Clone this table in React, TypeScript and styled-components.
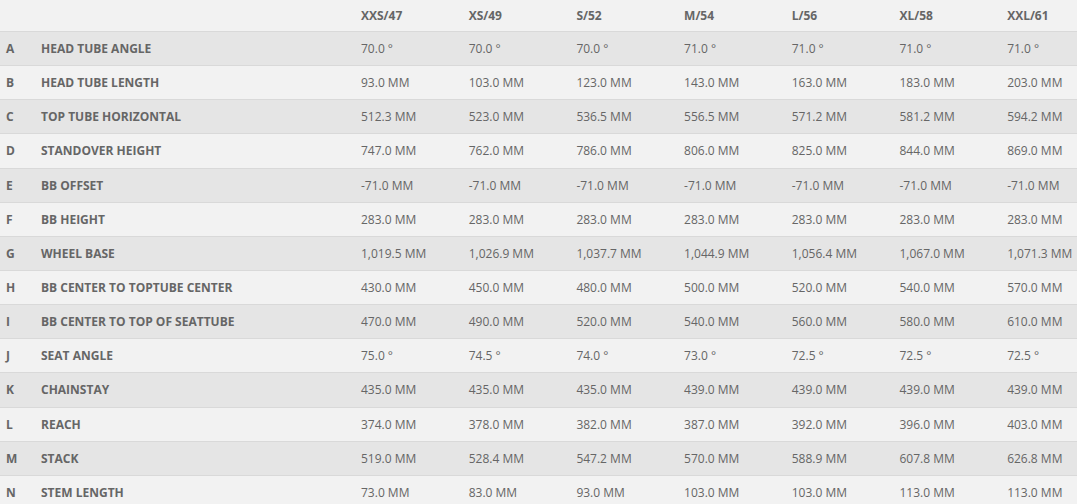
import React, { FC } from 'react';
import styled, { createGlobalStyle } from 'styled-components';

const GlobalStyle = createGlobalStyle`
  html, body {
    margin: 0;
    padding: 0;
    background: #f2f2f2;
    overflow: hidden;
  }
  body {
    font-family: 'Open Sans', 'Liberation Sans', sans-serif;
    color: #666;
  }
`;

const sizes = ['XXS/47', 'XS/49', 'S/52', 'M/54', 'L/56', 'XL/58', 'XXL/61'];

interface IRow {
  key: string;
  name: string;
  values: string[];
}

const rows: IRow[] = [
  { key: 'A', name: 'HEAD TUBE ANGLE', values: ['70.0 °', '70.0 °', '70.0 °', '71.0 °', '71.0 °', '71.0 °', '71.0 °'] },
  { key: 'B', name: 'HEAD TUBE LENGTH', values: ['93.0 MM', '103.0 MM', '123.0 MM', '143.0 MM', '163.0 MM', '183.0 MM', '203.0 MM'] },
  { key: 'C', name: 'TOP TUBE HORIZONTAL', values: ['512.3 MM', '523.0 MM', '536.5 MM', '556.5 MM', '571.2 MM', '581.2 MM', '594.2 MM'] },
  { key: 'D', name: 'STANDOVER HEIGHT', values: ['747.0 MM', '762.0 MM', '786.0 MM', '806.0 MM', '825.0 MM', '844.0 MM', '869.0 MM'] },
  { key: 'E', name: 'BB OFFSET', values: ['-71.0 MM', '-71.0 MM', '-71.0 MM', '-71.0 MM', '-71.0 MM', '-71.0 MM', '-71.0 MM'] },
  { key: 'F', name: 'BB HEIGHT', values: ['283.0 MM', '283.0 MM', '283.0 MM', '283.0 MM', '283.0 MM', '283.0 MM', '283.0 MM'] },
  { key: 'G', name: 'WHEEL BASE', values: ['1,019.5 MM', '1,026.9 MM', '1,037.7 MM', '1,044.9 MM', '1,056.4 MM', '1,067.0 MM', '1,071.3 MM'] },
  { key: 'H', name: 'BB CENTER TO TOPTUBE CENTER', values: ['430.0 MM', '450.0 MM', '480.0 MM', '500.0 MM', '520.0 MM', '540.0 MM', '570.0 MM'] },
  { key: 'I', name: 'BB CENTER TO TOP OF SEATTUBE', values: ['470.0 MM', '490.0 MM', '520.0 MM', '540.0 MM', '560.0 MM', '580.0 MM', '610.0 MM'] },
  { key: 'J', name: 'SEAT ANGLE', values: ['75.0 °', '74.5 °', '74.0 °', '73.0 °', '72.5 °', '72.5 °', '72.5 °'] },
  { key: 'K', name: 'CHAINSTAY', values: ['435.0 MM', '435.0 MM', '435.0 MM', '439.0 MM', '439.0 MM', '439.0 MM', '439.0 MM'] },
  { key: 'L', name: 'REACH', values: ['374.0 MM', '378.0 MM', '382.0 MM', '387.0 MM', '392.0 MM', '396.0 MM', '403.0 MM'] },
  { key: 'M', name: 'STACK', values: ['519.0 MM', '528.4 MM', '547.2 MM', '570.0 MM', '588.9 MM', '607.8 MM', '626.8 MM'] },
  { key: 'N', name: 'STEM LENGTH', values: ['73.0 MM', '83.0 MM', '93.0 MM', '103.0 MM', '103.0 MM', '113.0 MM', '113.0 MM'] },
];

const Table = styled.div`
  width: 1110px;
  font-size: 12px;
`;

const Row = styled.div<{ $shaded?: boolean }>`
  display: grid;
  grid-template-columns: 35px 320px repeat(7, 107.7px);
  align-items: center;
  height: 34.15px;
  box-sizing: border-box;
  background: ${(p) => (p.$shaded ? '#e5e5e5' : '#f2f2f2')};
  border-bottom: 1px solid #d9d9d9;
`;

const HeaderRow = styled(Row)`
  height: 32px;
  padding-bottom: 7px;
  align-items: end;
`;

const Key = styled.span`
  padding-left: 6px;
  font-weight: 700;
`;

const Name = styled.span`
  padding-left: 6px;
  font-weight: 700;
`;

const Size = styled.span`
  padding-left: 6px;
  font-weight: 700;
`;

const Value = styled.span`
  padding-left: 6px;
  font-weight: 400;
  white-space: nowrap;
`;

const GeometryTable: FC = () => (
  <Table>
    <HeaderRow>
      <span />
      <span />
      {sizes.map((s) => (
        <Size key={s}>{s}</Size>
      ))}
    </HeaderRow>
    {rows.map((r, i) => (
      <Row key={r.key} $shaded={i % 2 === 0}>
        <Key>{r.key}</Key>
        <Name>{r.name}</Name>
        {r.values.map((v, j) => (
          <Value key={j}>{v}</Value>
        ))}
      </Row>
    ))}
  </Table>
);

export default function App() {
  return (
    <>
      <GlobalStyle />
      <GeometryTable />
    </>
  );
}
